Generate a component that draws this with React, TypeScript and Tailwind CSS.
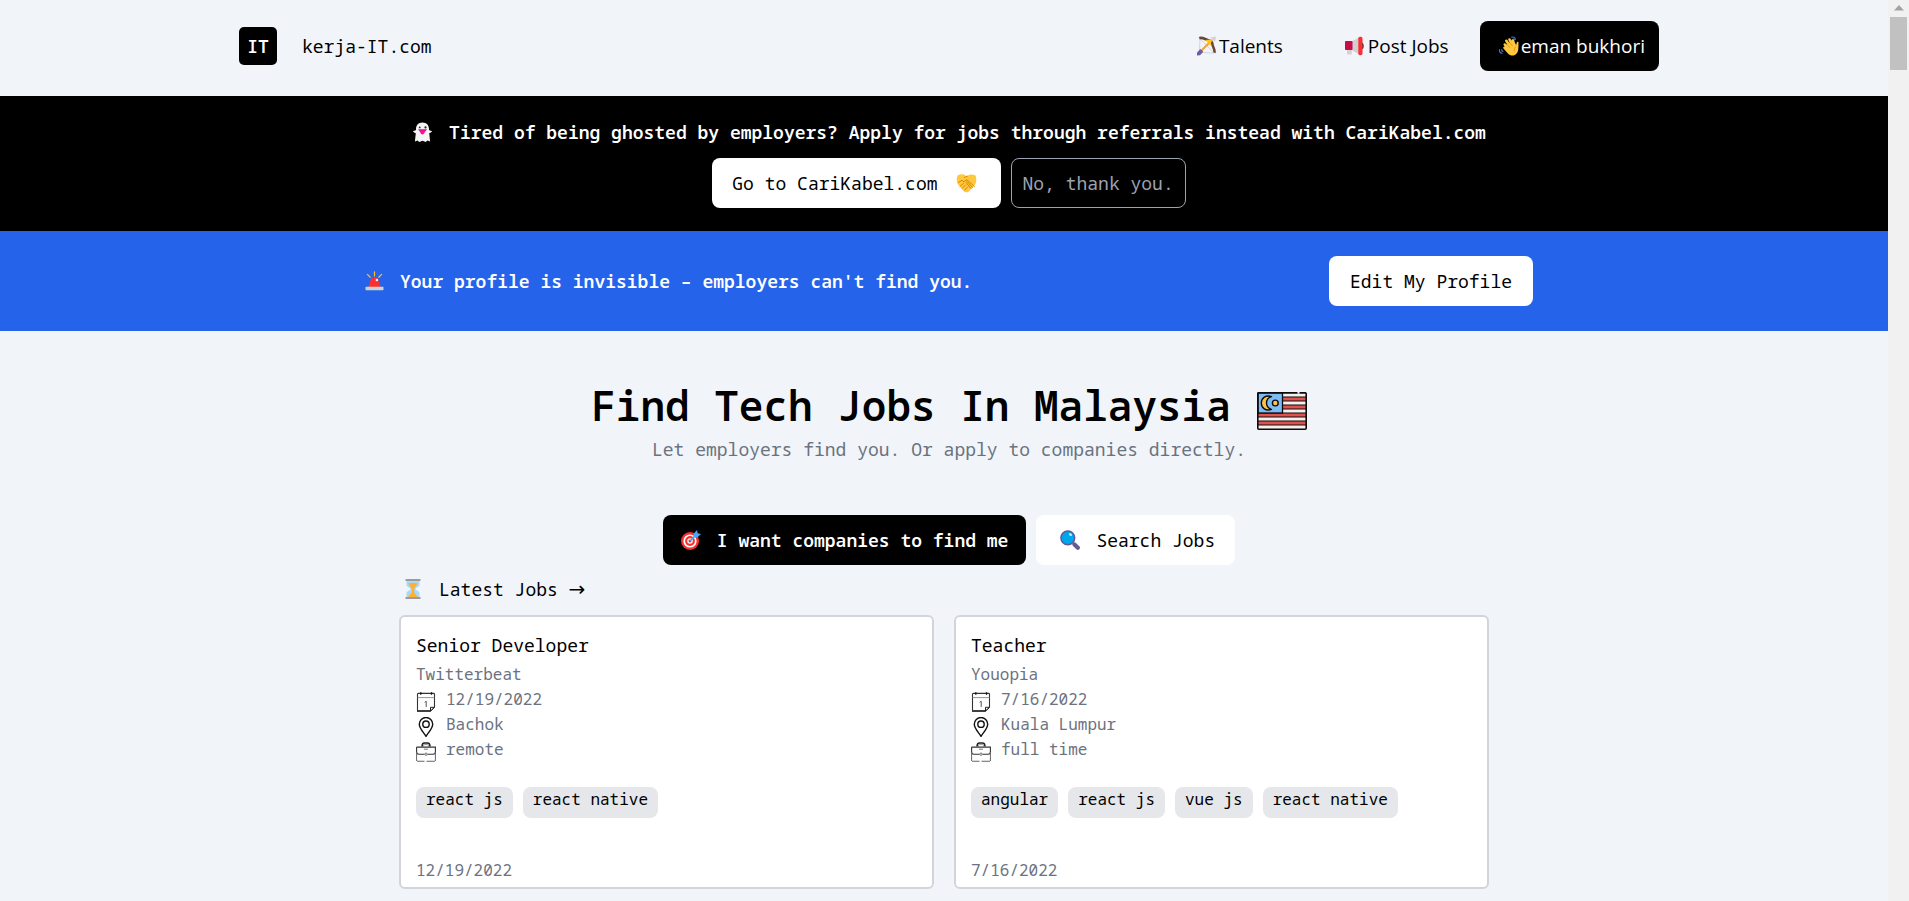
import type { ReactNode } from "react";

type IconProps = { className?: string };

function Svg({ className = "size-5", children, box = "0 0 20 20" }: IconProps & { children: ReactNode; box?: string }) {
  return (
    <svg viewBox={box} className={`${className} shrink-0`} fill="none" aria-hidden="true">
      {children}
    </svg>
  );
}

const Bow = () => (
  <Svg className="w-[21px] h-5">
    <path d="M3.5 2.6 3 16.5M3.5 2.8 17.5 16.8M3 16.5 17.5 17" stroke="#c9ccd1" strokeWidth="0.8" />
    <path d="M2.8 2.2C6 .8 9 3.8 12 4.2c2.600.4 3.900 1.800 4 4.300.1 2.800 3 5 1.800 8.200" stroke="#6d4534" strokeWidth="2.600" />
    <path d="M3.500 16 15.500 4" stroke="#f0a03c" strokeWidth="2" />
    <path d="m9 4 5 6 .8-6.500z" fill="#fcc21b" />
    <path d="M13.800 1.500 19.500.5 18.500 6z" fill="#cfd3d8" />
    <path d="M.5 16.500 3.800 13l3 2.800-3.300 3.500-3 .2z" fill="#6d5ba3" />
  </Svg>
);

const Megaphone = () => (
  <Svg className="w-[21px] h-5">
    <path d="M17 6.500c3 0 3 7 0 7z" fill="#3a3a3a" />
    <path d="M2.500 12h4.800v5.600a1 1 0 0 1-1 1H3.500a1 1 0 0 1-1-1z" fill="#d3d3d3" />
    <path d="M7 5.500 15 1.500v17L7 14z" fill="#cfcfcf" />
    <rect x="0.500" y="5" width="7.500" height="9" rx="0.800" fill="#ca0b4a" />
    <rect x="13.800" y="0.800" width="4.200" height="18.400" rx="1.600" fill="#f92f35" />
  </Svg>
);

const Wave = () => (
  <Svg className="w-[21px] h-5">
    <path d="M13 1.200c2-.6 3.500.3 4 2M14.500 3c.9-.2 1.400.1 1.700.9M1 13.500c-.3 2 .8 3.500 2.600 3.800M3.200 13.500c-.2 1 .3 1.700 1.200 2" stroke="#3f78d8" strokeWidth="1.100" strokeLinecap="round" />
    <path d="M6.300 8.500 10 14M7.800 4.800 12 11M11 3.500l3.200 6.500M14.300 4.500l1.800 5.500" stroke="#ffc83d" strokeWidth="2.600" strokeLinecap="round" />
    <path d="M6 9.500 14.500 5l3.200 4 .600-2.500c.4-1.300 1.700-1 1.700.3-.1 2.200.1 4.500-.3 7-.6 4-3.600 6.200-6.900 5.700-1.700-.3-3-1.500-4.300-3L5 12.500c-.9-1.300.3-2.300 1.300-1.500z" fill="#ffc83d" />
    <path d="m8.800 8.500 2.400 3M11.500 6.500l2.500 3.500M15.800 15c-.4-2 .4-3.800 1.900-4.800" stroke="#d67d00" strokeWidth="0.600" strokeLinecap="round" />
  </Svg>
);

const Ghost = () => (
  <Svg className="w-[21px] h-5">
    <path d="M10 .5c4 0 6.500 2.800 6.500 6.500v.8c.4.600 1 1 2 .9.900 0 1.200.8.500 1.400-.8.700-1.500 1-2.300 1.100l.9 8.300-2.600-.9-1.800 1.400-3.200-1.200L6.800 20 5 18.600l-2.600.9.900-8.300C2.500 11.100 1.800 10.800 1 10.100.3 9.500.6 8.700 1.500 8.700c1 .1 1.600-.3 2-.9V7C3.500 3.300 6 .5 10 .5z" fill="#f4f4f4" />
    <circle cx="7.200" cy="5.400" r="0.900" fill="#321b41" />
    <circle cx="13" cy="5.400" r="1.100" fill="#321b41" />
    <path d="M6.500 8h7.200c-.2 1.200-1 1.700-1.400 2-.3 1.500-1.300 2.400-2.400 2.400S8 11.500 7.700 10C7.200 9.700 6.700 9.100 6.500 8z" fill="#ff0d9a" />
    <path d="M6.300 7.700h7.600" stroke="#7b1467" strokeWidth="0.800" strokeLinecap="round" />
  </Svg>
);

const Handshake = () => (
  <Svg className="w-[21px] h-5">
    <path d="M1 2.500C4 .8 7.500 1 10 3.200c3-2.200 6.200-2.400 9-.6 1.300 3 1.100 6.500-.4 9L12 18.800c-1.300.8-2.800.7-4-.1L1.500 11.500C-.1 8.800-.1 5.200 1 2.500z" fill="#ffc83d" />
    <path d="m2 9.500 3.500-2.300L7.500 9l2-2.200 2 .8 6.500 6M8 4.500l3-1.300M7 10.500l-3.500 3M9 12l-3.500 3.500M11 14l-3 3.300M10.500 8.500l5.500 6M9.500 9.500l5 6" stroke="#d67d00" strokeWidth="0.900" strokeLinecap="round" />
  </Svg>
);

const Siren = () => (
  <Svg className="w-[19px] h-5">
    <path d="M10 .5v4M2.500 3l3 3M17.500 3l-3 3" stroke="#fcc21b" strokeWidth="1.300" strokeLinecap="round" />
    <path d="M3.500 16.500 5.800 9C6.500 6.800 8 5.800 10 5.800s3.500 1 4.200 3.200l2.300 7.500z" fill="#f8312f" />
    <circle cx="12.500" cy="9" r="1.300" fill="#fff" />
    <rect x="0.500" y="16" width="19" height="3.700" rx="0.800" fill="#cdd0d4" />
  </Svg>
);

const Dart = () => (
  <Svg className="size-5">
    <circle cx="9" cy="11" r="9" fill="#f8312f" />
    <circle cx="9" cy="11" r="6.600" fill="#fff" />
    <circle cx="9" cy="11" r="4.900" fill="#f8312f" />
    <circle cx="9" cy="11" r="2.800" fill="#fff" />
    <circle cx="9" cy="11" r="1.500" fill="#f8312f" />
    <path d="m9.300 10.800 6-6" stroke="#46a4fb" strokeWidth="1.600" />
    <path d="m12.500 7.500.3-4L16 0l.700 3.300L20 4l-3.500 3.200z" fill="#46a4fb" />
  </Svg>
);

const Magnifier = () => (
  <Svg className="size-5">
    <path d="m13 13 2 2" stroke="#998ea4" strokeWidth="2" />
    <path d="m14.500 14.500 3.300 3.200" stroke="#635994" strokeWidth="4.200" strokeLinecap="round" />
    <circle cx="7.800" cy="7.800" r="6.900" fill="#00a6ed" stroke="#635994" strokeWidth="1.500" />
    <ellipse cx="10.500" cy="4.600" rx="1.700" ry="1.200" transform="rotate(40 10.500 4.600)" fill="#c4ecff" />
  </Svg>
);

const Hourglass = () => (
  <Svg className="w-4 h-5" box="0 0 16 20">
    <path d="M1.500 1h13v5c0 2-4 2.500-4 4s4 2 4 4v5h-13v-5c0-2 4-2.500 4-4s-4-2-4-4z" fill="#a8d8fb" />
    <path d="M3.500 4h9c-.2 3-3.300 4-3.300 6.500v3l3.800 4.500H3l3.800-4.500v-3C6.800 8 3.700 7 3.500 4z" fill="#ffb02e" />
    <rect x="0.500" y="0" width="15" height="2" rx="0.500" fill="#9b9b9b" />
    <rect x="0.500" y="18" width="15" height="2" rx="0.500" fill="#9b9b9b" />
  </Svg>
);

const stripes = [1, 5, 9, 13, 17, 21, 25, 29, 33];

const Flag = () => (
  <Svg className="w-[50px] h-[38px]" box="0 0 50 38">
    <rect x="1" y="1" width="48" height="36" rx="1" fill="#f3efea" />
    {stripes.map((y, i) => (
      <g key={y}>
        {i % 2 === 1 && <rect x="1" y={y} width="48" height="4" fill="#e0524f" />}
        <path d={`M1 ${y}h48`} stroke="#0c0c0c" strokeWidth="1.200" />
      </g>
    ))}
    <rect x="1" y="1" width="24.500" height="20" fill="#7cbcf5" stroke="#0c0c0c" strokeWidth="1.300" />
    <path d="M14.500 4.600C9 2.600 4.300 6 4.300 11s4.700 8.400 10.200 6.400c-3-.9-5-3.400-5-6.400s2-5.500 5-6.400z" fill="#fcc447" stroke="#0c0c0c" strokeWidth="1.400" strokeLinejoin="round" />
    <circle cx="18.300" cy="11" r="2.900" fill="#fcc447" stroke="#0c0c0c" strokeWidth="1.400" />
    <rect x="0.800" y="0.800" width="48.400" height="36.400" rx="1" stroke="#0c0c0c" strokeWidth="1.600" />
    <path d="M40.500.8h2" stroke="#f1f5f9" strokeWidth="1.800" />
  </Svg>
);

const Calendar = () => (
  <Svg>
    <path d="M1.500 4.500V2.300c0-.6.300-.9.900-.9h15.200c.6 0 .9.300.9.900V15M1.500 4v14.200" stroke="#333" strokeWidth="1.100" />
    <path d="M1 19h13.500" stroke="#111" strokeWidth="1.600" />
    <path d="M14.500 19.200v-3.900h4zM14.500 19.200l4-4" stroke="#222" strokeWidth="1" />
    <path d="M1.500 5.600h17" stroke="#888" strokeWidth="0.900" />
    <path d="M4.800.2v2.600M15.500.2v2.600" stroke="#111" strokeWidth="1.300" />
    <path d="m8.700 10.300 1.500-1v5.700" stroke="#555" strokeWidth="1" />
  </Svg>
);

const Pin = () => (
  <Svg>
    <path d="M10 19.300C8 15.800 3.300 11.500 3.300 7.200a6.700 6.700 0 0 1 13.400 0c0 4.300-4.700 8.600-6.700 12.100z" stroke="#111" strokeWidth="1.400" />
    <circle cx="10" cy="7.200" r="3.200" stroke="#111" strokeWidth="1.400" />
  </Svg>
);

const Briefcase = () => (
  <Svg>
    <path d="M6 4.500C6 2 6.800.9 8.500.9h3c1.700 0 2.500 1.100 2.500 3.600" stroke="#222" strokeWidth="1.500" />
    <path d="M7.500 4.500c0-1.300.4-2 1.500-2h2c1.100 0 1.500.7 1.500 2" stroke="#777" strokeWidth="0.700" />
    <path d="M.6 5.100h18.800V10c0 1.500-.8 2.200-2.300 2.200h-5.600M.6 5.100V10c0 1.500.8 2.200 2.300 2.200h5.600" stroke="#333" strokeWidth="1.100" />
    <path d="M.6 10v9M19.400 10v9" stroke="#666" strokeWidth="1" />
    <path d="M1 19.300h7.500M10.500 19.300H19" stroke="#666" strokeWidth="1.100" />
    <path d="M8 7.200h4" stroke="#555" strokeWidth="0.800" />
    <circle cx="10" cy="12.200" r="1.200" stroke="#555" strokeWidth="0.800" />
  </Svg>
);

type Job = { title: string; company: string; date: string; place: string; kind: string; tags: string[] };

const jobs: Job[] = [
  { title: "Senior Developer", company: "Twitterbeat", date: "12/19/2022", place: "Bachok", kind: "remote", tags: ["react js", "react native"] },
  { title: "Teacher", company: "Youopia", date: "7/16/2022", place: "Kuala Lumpur", kind: "full time", tags: ["angular", "react js", "vue js", "react native"] },
];

function Detail({ icon, children }: { icon: ReactNode; children: ReactNode }) {
  return (
    <li className="flex items-end gap-2.5">
      {icon}
      <span>{children}</span>
    </li>
  );
}

function JobCard({ job }: { job: Job }) {
  return (
    <article className="rounded-md border-2 border-[#d1d5db] bg-white px-[15px] pt-3.5 pb-1 text-base leading-[25px] text-[#6b7280]">
      <h2 className="pb-0.5 text-lg leading-[29px] text-black">{job.title}</h2>
      <p>{job.company}</p>
      <ul>
        <Detail icon={<Calendar />}>{job.date}</Detail>
        <Detail icon={<Pin />}>{job.place}</Detail>
        <Detail icon={<Briefcase />}>{job.kind}</Detail>
      </ul>
      <ul className="mt-[25px] flex flex-wrap gap-2.5 text-black">
        {job.tags.map((tag) => (
          <li key={tag} className="rounded-lg bg-[#e5e7eb] px-2.5 pb-1.5">
            {tag}
          </li>
        ))}
      </ul>
      <p className="mt-10">{job.date}</p>
    </article>
  );
}

export default function App() {
  return (
    <div className="flex min-h-screen bg-[#f1f5f9] font-['Noto_Sans_Mono','DejaVu_Sans_Mono',monospace] text-lg leading-7 text-black">
      <div className="min-w-0 flex-1">
        <header className="mx-auto flex max-w-[1430px] items-center justify-between pt-[21px] pb-[25px] pl-2.5">
          <a href="#" className="flex items-center gap-[25px]">
            <span className="flex size-[38px] items-center justify-center rounded-[5px] bg-black font-semibold text-white">IT</span>
            <span>kerja-IT.com</span>
          </a>
          <nav className="flex items-center font-['Open_Sans',sans-serif] text-[19px]">
            <a href="#talents" className="flex items-center gap-0.5">
              <Bow />
              Talents
            </a>
            <a href="#post" className="ml-[61px] flex items-center gap-[3px]">
              <Megaphone />
              Post Jobs
            </a>
            <button type="button" className="ml-[31px] flex h-[50px] items-center gap-0.5 rounded-lg bg-black pr-[14px] pl-[18px] text-white">
              <Wave />
              eman bukhori
            </button>
          </nav>
        </header>

        <section className="bg-black pt-[22px] pb-[23px] pl-2.5 text-white">
          <p className="flex items-center justify-center gap-4 font-semibold">
            <Ghost />
            Tired of being ghosted by employers? Apply for jobs through referrals instead with CariKabel.com
          </p>
          <div className="mt-3 flex justify-center gap-2.5">
            <button type="button" className="flex h-[50px] items-center gap-[18px] rounded-lg bg-white pr-6 pl-5 text-black">
              Go to CariKabel.com
              <Handshake />
            </button>
            <button type="button" className="h-[50px] rounded-lg border border-[#9ca3af] px-[11px] text-[#9ca3af]">
              No, thank you.
            </button>
          </div>
        </section>

        <section className="bg-[#2563eb] pt-[25px] pb-[25px] pl-2.5 text-white">
          <div className="mx-auto flex max-w-[1168px] items-center justify-between">
            <p className="flex items-center gap-4 font-semibold">
              <Siren />
              Your profile is invisible – employers can't find you.
            </p>
            <button type="button" className="h-[50px] rounded-lg bg-white px-[21px] text-black">
              Edit My Profile
            </button>
          </div>
        </section>

        <main>
          <div className="pt-[49px] pl-2.5">
            <h1 className="flex items-end justify-center gap-[26px] text-[41px] leading-[50px] font-semibold">
              Find Tech Jobs In Malaysia
              <Flag />
            </h1>
            <p className="mt-[5px] text-center text-[#6b7280]">Let employers find you. Or apply to companies directly.</p>
            <div className="mt-[52px] flex justify-center gap-2.5">
              <button type="button" className="flex h-[50px] items-center gap-4 rounded-lg bg-black px-[18px] font-semibold text-white">
                <Dart />
                I want companies to find me
              </button>
              <button type="button" className="flex h-[50px] items-center gap-4 rounded-lg bg-white pr-5 pl-6">
                <Magnifier />
                Search Jobs
              </button>
            </div>
          </div>

          <section className="mx-auto max-w-[1090px] pt-2.5 pb-3">
            <a href="#latest" className="flex items-center gap-[18px] pl-1.5">
              <Hourglass />
              <span>
                Latest Jobs <span className="font-['DejaVu_Sans',sans-serif] text-xl leading-7">→</span>
              </span>
            </a>
            <div className="mt-3 grid grid-cols-2 gap-5">
              {jobs.map((job) => (
                <JobCard key={job.title} job={job} />
              ))}
            </div>
          </section>
        </main>
      </div>

      <div className="flex w-[21px] flex-col items-center bg-[#f1f1f1]" aria-hidden="true">
        <svg viewBox="0 0 20 17" className="h-[17px] w-5">
          <path d="M5 10.500 10 5l5 5.500z" fill="#a3a3a3" />
        </svg>
        <div className="h-[53px] w-[17px] bg-[#c1c1c1]" />
      </div>
    </div>
  );
}
